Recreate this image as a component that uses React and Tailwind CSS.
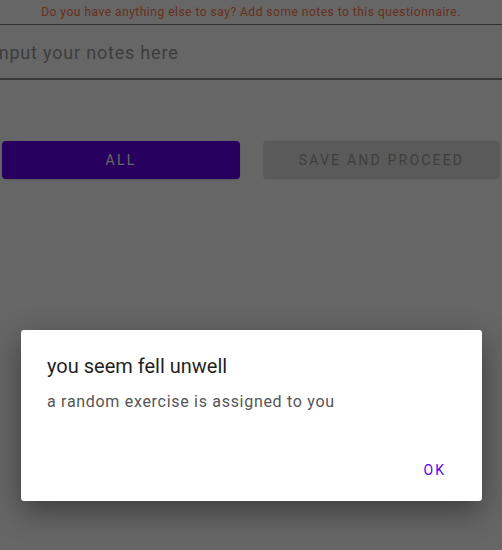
export default function App() {
  return (
    <div className="relative h-[550px] w-[502px] overflow-hidden bg-white font-['Roboto',sans-serif]">
      <div className="flex h-[25px] items-center justify-center border-b border-[#7a7a7a]">
        <p className="text-[12px] tracking-[0.5px] text-[#ff7a4a]">
          Do you have anything else to say? Add some notes to this questionnaire.
        </p>
      </div>

      <div className="flex h-[55px] items-center border-b-2 border-[#8a8a8a] pt-[2px]">
        <p className="-ml-[7px] whitespace-nowrap text-[18px] tracking-[0.8px] text-[#9a9a9a]">
          Input your notes here
        </p>
      </div>

      <div className="mt-[61px] flex gap-[23px] px-[2px]">
        <button className="h-[38px] w-[238px] rounded-[4px] bg-[#6200ee] text-[14px] font-normal tracking-[2.2px] text-white shadow-sm">
          ALL
        </button>
        <button className="h-[38px] w-[237px] rounded-[4px] bg-[#e0e0e0] text-[14px] font-normal tracking-[2.2px] text-[#9c9c9c]">
          SAVE AND PROCEED
        </button>
      </div>

      <div className="absolute inset-0 bg-black/60 pl-[21px] pt-[330px]">
        <div className="flex h-[171px] w-[461px] flex-col rounded-[3px] bg-white shadow-[0_10px_30px_rgba(0,0,0,0.4)]">
          <h2 className="ml-[26px] mt-[21px] text-[20px] leading-[30px] text-[#1f1f1f]">
            you seem fell unwell
          </h2>
          <p className="ml-[26px] mt-[11px] text-[16px] leading-[20px] tracking-[0.7px] text-[#555555]">
            a random exercise is assigned to you
          </p>
          <div className="mt-auto flex justify-end pb-[20px] pr-[36px]">
            <button className="text-[14px] font-normal tracking-[2px] text-[#6200ee]">OK</button>
          </div>
        </div>
      </div>
    </div>
  )
}
